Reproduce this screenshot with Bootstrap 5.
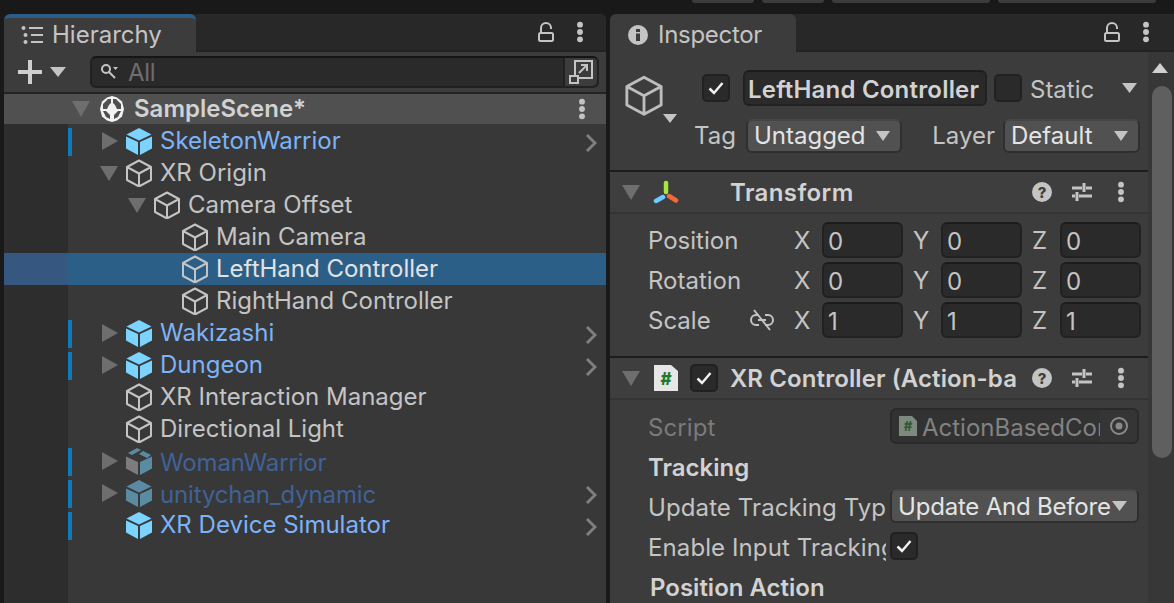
<!DOCTYPE html>
<html lang="en">
<head>
<meta charset="UTF-8">
<title>Unity Editor</title>
<link href="https://cdn.jsdelivr.net/npm/bootstrap@5.3.0/dist/css/bootstrap.min.css" rel="stylesheet">
<style>
html, body { height: 100%; }
body { background: #191919; color: #c4c4c4; font-family: Inter, "Liberation Sans", sans-serif; font-size: 24px; line-height: 32px; overflow: hidden; }
svg { display: block; flex: none; }
.topstrip { height: 14px; padding-left: 692px; gap: 8px; }
.topstrip div { height: 3px; background: #3c3c3c; border-radius: 0 0 3px 3px; }
.panes { height: 589px; padding-left: 4px; gap: 4px; }
.pane-left { width: 602px; background: #383838; border-radius: 6px 6px 0 0; overflow: hidden; }
.pane-right { flex: 1; background: #3c3c3c; border-radius: 6px 0 0 0; overflow: hidden; }
.tabstrip { height: 38px; background: #282828; border-bottom: 2px solid #232323; flex: none; }
.unity-tab { height: 38px; background: #3c3c3c; color: #c4c4c4; border-radius: 6px 6px 0 0; }
.tab-h { width: 192px; padding-left: 17px; gap: 8px; border-top: 4px solid #2c5d87; }
.tab-i { width: 186px; padding-left: 18px; gap: 10px; border-top: 4px solid #3c3c3c; letter-spacing: -.3px; }
.tab-tools { gap: 22px; padding-right: 22px; }
.pane-right .tab-tools { padding-right: 24px; }
.hier-tools { height: 42px; background: #3c3c3c; padding: 0 7px 0 14px; border-bottom: 2px solid #232323; flex: none; }
.searchbox { flex: 1; height: 32px; margin-left: 24px; background: #2a2a2a; border: 2px solid #212121; border-top-color: #151515; border-radius: 6px; color: #6e6e6e; padding-left: 8px; }
.srch-text { line-height: 26px; margin-left: 10px; margin-top: 2px; letter-spacing: -.3px; }
.searchbtn { height: 28px; width: 34px; border-left: 2px solid #212121; margin-left: auto; background: #3c3c3c; border-radius: 0 5px 5px 0; }
.scene-row { height: 30px; background: #505050; font-weight: 600; color: #d2d2d2; padding-left: 68px; padding-right: 20px; flex: none; }
.hier-body { flex: 1; background: linear-gradient(to right, #2d2d2d 64px, #383838 64px); padding-top: 1px; }
.hrow { height: 32px; gap: 7px; padding-right: 9px; white-space: nowrap; position: relative; }
.hrow.selected { background: #2c5f88; color: #e2e2e2; }
.gutter-tint { position: absolute; left: 0; top: 0; width: 64px; height: 32px; background: #36577f; }
.depth1 { padding-left: 121px; }
.depth2 { padding-left: 149px; }
.depth3 { padding-left: 177px; }
.twisty { margin-left: -23px; margin-right: -7px; width: 23px; }
.pfb { color: #7cb3f8; }
.pfb-off { color: #3f6297; }
.pfb-off .row-name { padding-top: 3px; letter-spacing: -.15px; }
.pfb-mark::before { content: ""; position: absolute; left: 64px; top: 3px; width: 4px; height: 28px; background: #0c7bbf; }
.go-right { margin-left: auto; margin-top: 4px; }
.insp-wrap { height: 551px; }
.insp-main { flex: 1; min-width: 0; }
.insp-scroll { width: 26px; flex: none; background: #373737; }
.insp-scroll .up { margin: 11px 0 0 4px; }
.insp-scroll .thumb { width: 20px; height: 372px; margin: 13px 0 0 4px; background: #5f5f5f; border-radius: 10px; }
.obj-head { height: 120px; border-bottom: 2px solid #1d1d1d; flex: none; padding: 15px 8px 0 14px; }
.obj-line { height: 42px; }
.field { background: #2a2a2a; border: 2px solid #212121; border-top-color: #1c1c1c; border-radius: 6px; }
.tick { width: 28px; height: 28px; background: #2a2a2a; border: 2px solid #212121; border-radius: 5px; flex: none; }
.namefield { width: 244px; height: 36px; font-weight: 600; color: #d2d2d2; padding-left: 3px; line-height: 35px; white-space: nowrap; overflow: hidden; letter-spacing: .2px; }
.drop { height: 34px; background: #515151; border: 2px solid #2f2f2f; border-top-color: #454545; border-radius: 6px; color: #e4e4e4; padding: 0 6px; line-height: 30px; white-space: nowrap; }
.comp-head { height: 42px; background: #3e3e3e; font-weight: 600; color: #d2d2d2; border-bottom: 2px solid #343434; padding-left: 12px; padding-right: 23px; flex: none; white-space: nowrap; position: relative; }
.comp-second { height: 44px; border-top: 2px solid #1d1d1d; }
.comp-title { position: absolute; left: 120px; letter-spacing: .1px; padding-top: 1px; }
.title-wide { letter-spacing: .4px; }
.comp-tools { margin-left: auto; gap: 20px; }
.comp-tools .kebab-end { margin-left: 5px; }
.vec-row { height: 40px; padding-left: 38px; padding-right: 8px; }
.vec-label { width: 146px; flex: none; position: relative; padding-top: 2px; }
.vec-axis { width: 28px; flex: none; padding-top: 2px; }
.num { width: 81px; height: 36px; padding-left: 4px; line-height: 35px; flex: none; margin-right: 10px; }
.num:last-child { margin-right: 0; }
.link-ico { position: absolute; left: 102px; top: 6px; }
.prop-row { height: 40px; padding-left: 38px; padding-right: 9px; white-space: nowrap; }
.prop-text { padding-top: 3px; }
.prop-name { width: 238px; margin-right: 4px; flex: none; overflow: hidden; padding-top: 3px; letter-spacing: .1px; }
.dim { color: #7a7a7a; }
.objfield { flex: 1; height: 36px; background: #323232; border: 2px solid #2a2a2a; border-radius: 6px; color: #828282; overflow: hidden; line-height: 32px; padding-left: 7px; gap: 5px; }
.obj-pick { margin-left: -5px; width: 37px; height: 32px; background: #353535; flex: none; }
.strong { font-weight: 600; color: #d2d2d2; }
.drop-long span { letter-spacing: -.2px; padding-top: 2px; }
.static-label { padding-top: 3px; }
</style>
</head>
<body>
<svg width="0" height="0" class="position-absolute">
  <symbol id="cube-line" viewBox="0 0 28 28"><path d="M14 1.500 26 8v13l-12 6.500L2 21V8zM2 8l12 6.500L26 8M14 14.500v13" fill="none" stroke="currentColor" stroke-width="2" stroke-linejoin="round"/></symbol>
  <symbol id="cube-fill" viewBox="0 0 28 28"><path d="M14 1 26.500 7.500 14 13.500 1.500 7.500z" fill="currentColor"/><path d="M1 9.500 13 15v13L1 21.500z M27 9.500 15 15v13l12-6.500z" fill="currentColor"/></symbol>
  <symbol id="kebab" viewBox="0 0 8 24"><circle cx="4" cy="4" r="3.200"/><circle cx="4" cy="12" r="3.200"/><circle cx="4" cy="20" r="3.200"/></symbol>
  <symbol id="tri-down" viewBox="0 0 16 14" preserveAspectRatio="none"><path d="M0 0h16L8 14z"/></symbol>
  <symbol id="tri-right" viewBox="0 0 14 18" preserveAspectRatio="none"><path d="M0 0l14 9L0 18z"/></symbol>
  <symbol id="lock" viewBox="0 0 16 20"><path d="M3 11V6a5 5 0 0 1 10 0v1" fill="none" stroke="#c4c4c4" stroke-width="2"/><rect x="1" y="11" width="14" height="8" rx="1.500" fill="none" stroke="#c4c4c4" stroke-width="2"/></symbol>
  <symbol id="chev" viewBox="0 0 12 20"><path d="M2 2l8 8-8 8" fill="none" stroke="currentColor" stroke-width="3"/></symbol>
  <symbol id="help" viewBox="0 0 20 20"><circle cx="10" cy="10" r="10" fill="#c4c4c4"/><text x="10" y="15.500" text-anchor="middle" font-family="Inter, sans-serif" font-size="15" font-weight="800" fill="#3e3e3e">?</text></symbol>
  <symbol id="sliders" viewBox="0 0 20 20"><path d="M0 6h10M14 6h6M12 1v9M0 14h3M7 14h13M5 10v9" fill="none" stroke="#c4c4c4" stroke-width="3"/></symbol>
  <symbol id="check" viewBox="0 0 16 14"><path d="M1.500 7.500 6 12 14.500 2" fill="none" stroke="#f0f0f0" stroke-width="2.500"/></symbol>
</svg>

<div class="topstrip d-flex">
  <div style="width:62px"></div><div style="width:62px"></div><div style="width:158px"></div><div style="width:158px"></div>
</div>

<div class="panes d-flex">
  <div class="pane-left d-flex flex-column">
    <div class="tabstrip d-flex align-items-start">
      <div class="unity-tab tab-h d-flex align-items-center">
        <svg width="23" height="20" viewBox="0 0 23 20" fill="#c4c4c4"><circle cx="2.500" cy="3" r="2"/><circle cx="4.500" cy="10" r="2"/><circle cx="4.500" cy="17" r="2"/><path d="M8 2h14v2H8zM10 9h12v2H10zM10 16h12v2H10z"/></svg>
        <span>Hierarchy</span>
      </div>
      <div class="tab-tools d-flex align-items-center ms-auto h-100">
        <svg width="16" height="20"><use href="#lock"/></svg>
        <svg width="8" height="22" fill="#c4c4c4"><use href="#kebab"/></svg>
      </div>
    </div>
    <div class="hier-tools d-flex align-items-center">
      <svg width="24" height="24" fill="#cfcfcf"><path d="M10 0h4v10h10v4H14v10h-4V14H0v-4h10z"/></svg>
      <svg class="ms-2" width="16" height="10" fill="#c4c4c4"><use href="#tri-down"/></svg>
      <div class="searchbox d-flex align-items-center">
        <svg width="18" height="18" viewBox="0 0 18 18" fill="none" stroke="#c4c4c4" stroke-width="2"><circle cx="6" cy="6" r="4"/><path d="M9 9l6 6"/><path d="M13 4h5l-2.500 3z" fill="#c4c4c4" stroke="none"/></svg>
        <span class="srch-text">All</span>
        <div class="searchbtn d-flex align-items-center justify-content-center">
          <svg width="24" height="24" viewBox="0 0 24 24" fill="none" stroke="#c4c4c4" stroke-width="2"><path d="M6 16V1h17v17H6z"/><rect x="1" y="16" width="8" height="7" fill="#3c3c3c"/><path d="M10 13l8-8M12 5h6v6"/></svg>
        </div>
      </div>
    </div>
    <div class="scene-row d-flex align-items-center">
      <svg width="18" height="16" fill="#6e6e6e"><use href="#tri-down"/></svg>
      <svg style="margin-left:10px" width="24" height="26" viewBox="0 0 24 26"><path d="M12 0l5 1.500 5 4L24 13l-2 7.500-5 4-5 1.500-5-1.500-5-4L0 13l2-7.500 5-4z" fill="#f2f2f2"/><path d="M8 3 3 8v5h4l2-4 2-2V3zM16 3l5 5v5h-4l-2-4-2-2V3zM3 15h3l4 4v4l-4-2zM21 15h-3l-4 4v4l4-2z" fill="#505050"/></svg>
      <span style="margin-left:10px">SampleScene*</span>
      <svg class="ms-auto" width="8" height="22" fill="#c4c4c4"><use href="#kebab"/></svg>
    </div>
    <div class="hier-body" id="hierBody"></div>
  </div>

  <div class="pane-right d-flex flex-column">
    <div class="tabstrip d-flex align-items-start">
      <div class="unity-tab tab-i d-flex align-items-center">
        <svg width="20" height="20" viewBox="0 0 20 20"><circle cx="10" cy="10" r="10" fill="#c4c4c4"/><path d="M8 4h4v3H8zM8 8.500h4V16H8z" fill="#3c3c3c"/></svg>
        <span>Inspector</span>
      </div>
      <div class="tab-tools d-flex align-items-center ms-auto h-100">
        <svg width="16" height="20"><use href="#lock"/></svg>
        <svg width="8" height="22" fill="#c4c4c4"><use href="#kebab"/></svg>
      </div>
    </div>
    <div class="insp-wrap d-flex">
      <div class="insp-main d-flex flex-column">
        <div class="obj-head">
          <div class="obj-line d-flex align-items-center">
            <svg width="40" height="44" style="color:#bdbdbd;margin-top:14px"><use href="#cube-line"/></svg>
            <div class="tick d-flex align-items-center justify-content-center" style="margin-left:38px"><svg width="16" height="14"><use href="#check"/></svg></div>
            <div class="field namefield" style="margin-left:13px">LeftHand Controller</div>
            <div class="tick" style="margin-left:7px"></div>
            <span class="ms-2 static-label">Static</span>
            <svg class="ms-auto" style="margin-right:3px" width="15" height="10" fill="#c4c4c4"><use href="#tri-down"/></svg>
          </div>
          <div class="obj-line d-flex align-items-center" style="margin-top:6px">
            <svg class="align-self-start" width="14" height="9" fill="#c4c4c4" style="margin-left:39px;margin-top:-1px"><use href="#tri-down"/></svg>
            <span class="text-nowrap" style="margin-left:17px">Tag</span>
            <div class="drop d-flex align-items-center" style="width:156px;margin-left:10px">Untagged<svg class="ms-auto me-1" width="14" height="10" fill="#c4c4c4"><use href="#tri-down"/></svg></div>
            <span class="ms-auto">Layer</span>
            <div class="drop d-flex align-items-center ms-2" style="width:137px">Default<svg class="ms-auto me-1" width="14" height="10" fill="#c4c4c4"><use href="#tri-down"/></svg></div>
          </div>
        </div>
        <div class="comp-head d-flex align-items-center">
          <svg width="18" height="15" fill="#6e6e6e"><use href="#tri-down"/></svg>
          <svg style="margin-left:13px" width="26" height="26" viewBox="0 0 26 26" fill="none" stroke-width="4.500" stroke-linecap="round"><path d="M13 4v9" stroke="#a6e83c"/><path d="M3 22l7-4" stroke="#6ccbff"/><path d="M16 17l7 4.500" stroke="#f0693a"/></svg>
          <span class="comp-title title-wide">Transform</span>
          <div class="comp-tools d-flex align-items-center">
            <svg width="20" height="20"><use href="#help"/></svg>
            <svg width="20" height="20"><use href="#sliders"/></svg>
            <svg class="kebab-end" width="8" height="22" fill="#c4c4c4"><use href="#kebab"/></svg>
          </div>
        </div>
        <div id="vecRows" style="padding:6px 0 16px"></div>
        <div class="comp-head comp-second d-flex align-items-center">
          <svg width="18" height="15" fill="#6e6e6e"><use href="#tri-down"/></svg>
          <svg style="margin-left:14px" width="24" height="28" viewBox="0 0 24 28"><path d="M0 1h17l7 6v20H0z" fill="#e6e6e6"/><text x="12" y="21" text-anchor="middle" font-family="Inter, sans-serif" font-size="17" font-weight="800" fill="#1d7a2e">#</text></svg>
          <div class="tick d-flex align-items-center justify-content-center" style="margin-left:12px"><svg width="16" height="14"><use href="#check"/></svg></div>
          <span class="comp-title">XR Controller (Action-ba</span>
          <div class="comp-tools d-flex align-items-center">
            <svg width="20" height="20"><use href="#help"/></svg>
            <svg width="20" height="20"><use href="#sliders"/></svg>
            <svg class="kebab-end" width="8" height="22" fill="#c4c4c4"><use href="#kebab"/></svg>
          </div>
        </div>
        <div style="padding-top:6px">
          <div class="prop-row d-flex align-items-center">
            <span class="prop-name dim">Script</span>
            <div class="objfield d-flex align-items-center">
              <svg width="18" height="20" viewBox="0 0 18 20"><path d="M0 0h13l5 5v15H0z" fill="#7f8a7f"/><text x="9" y="15" text-anchor="middle" font-family="Inter, sans-serif" font-size="13" font-weight="800" fill="#2d5a32">#</text></svg>
              <span class="flex-grow-1 overflow-hidden prop-text">ActionBasedController</span>
              <div class="obj-pick d-flex align-items-center justify-content-center"><svg width="20" height="20" viewBox="0 0 20 20" fill="none" stroke="#8a8a8a" stroke-width="2"><circle cx="10" cy="10" r="8"/><circle cx="10" cy="10" r="2.500" fill="#8a8a8a"/></svg></div>
            </div>
          </div>
          <div class="prop-row d-flex align-items-center strong"><span class="prop-text">Tracking</span></div>
          <div class="prop-row d-flex align-items-center">
            <span class="prop-name">Update Tracking Type</span>
            <div class="drop drop-long d-flex align-items-center flex-grow-1"><span>Update And Before</span><svg class="ms-auto me-1" width="15" height="10" fill="#c4c4c4"><use href="#tri-down"/></svg></div>
          </div>
          <div class="prop-row d-flex align-items-center">
            <span class="prop-name">Enable Input Tracking</span>
            <div class="tick d-flex align-items-center justify-content-center"><svg width="16" height="14"><use href="#check"/></svg></div>
          </div>
          <div class="prop-row d-flex align-items-center strong" style="padding-left:40px"><span class="prop-text">Position Action</span></div>
        </div>
      </div>
      <div class="insp-scroll">
        <svg class="up" width="16" height="10" fill="#d0d0d0" viewBox="0 0 16 14" preserveAspectRatio="none"><path d="M0 14h16L8 0z"/></svg>
        <div class="thumb"></div>
      </div>
    </div>
  </div>
</div>

<script>
var rows = [
  {n:"SkeletonWarrior", d:1, tw:"r", ic:"f", c:"pfb", mark:1, more:1},
  {n:"XR Origin", d:1, tw:"d"},
  {n:"Camera Offset", d:2, tw:"d"},
  {n:"Main Camera", d:3},
  {n:"LeftHand Controller", d:3, sel:1},
  {n:"RightHand Controller", d:3},
  {n:"Wakizashi", d:1, tw:"r", ic:"f", c:"pfb", mark:1, more:1},
  {n:"Dungeon", d:1, tw:"r", ic:"f", c:"pfb", mark:1, more:1},
  {n:"XR Interaction Manager", d:1},
  {n:"Directional Light", d:1},
  {n:"WomanWarrior", d:1, tw:"r", ic:"m", c:"pfb-off", mark:1},
  {n:"unitychan_dynamic", d:1, tw:"r", ic:"o", c:"pfb-off", mark:1, more:1},
  {n:"XR Device Simulator", d:1, ic:"f", c:"pfb", mark:1, more:1}
];
document.getElementById("hierBody").innerHTML = rows.map(function(r) {
  var tw = "";
  if (r.tw == "r") tw = '<span class="twisty"><svg width="16" height="18" fill="#6e6e6e"><use href="#tri-right"/></svg></span>';
  if (r.tw == "d") tw = '<span class="twisty"><svg width="18" height="15" fill="#6e6e6e" style="margin-left:-2px"><use href="#tri-down"/></svg></span>';
  var icon = '<svg width="28" height="28" style="color:#c4c4c4"><use href="#cube-line"/></svg>';
  if (r.ic == "f") icon = '<svg width="28" height="28" style="color:#7ad4ff"><use href="#cube-fill"/></svg>';
  if (r.ic == "o") icon = '<svg width="28" height="28" style="color:#5b8ba3"><use href="#cube-fill"/></svg>';
  if (r.ic == "m") icon = '<svg width="28" height="28" viewBox="0 0 28 28"><path d="M1 9.500 13 15v13L1 21.500z" fill="#7c7c7c"/><path d="M27 9.500 15 15v13l12-6.500z" fill="#5b8ba3"/><path d="M3 6l9-5 4 2-9 5zM18 4l8 4-4 3-8-4z" fill="#5b8ba3"/></svg>';
  return '<div class="hrow d-flex align-items-center depth' + r.d + (r.sel ? ' selected' : '') + (r.mark ? ' pfb-mark' : '') + (r.c ? ' ' + r.c : '') + '">' +
    (r.sel ? '<span class="gutter-tint"></span>' : '') + tw + '<span class="position-relative">' + icon + '</span><span class="row-name position-relative">' + r.n + '</span>' +
    (r.more ? '<svg class="go-right" width="12" height="20" style="color:#7f7f7f"><use href="#chev"/></svg>' : '') + '</div>';
}).join("");

var vecs = [["Position","0"],["Rotation","0"],["Scale","1"]];
document.getElementById("vecRows").innerHTML = vecs.map(function(v) {
  var link = v[0] == "Scale" ? '<svg class="link-ico" width="24" height="22" viewBox="0 0 24 22" fill="none" stroke="#c4c4c4" stroke-width="2"><path d="M9 6H6a5 5 0 0 0 0 10h3M15 6h3a5 5 0 0 1 0 10h-3M8 11h8M4 1l16 20"/></svg>' : '';
  var cells = ["X","Y","Z"].map(function(a) {
    return '<span class="vec-axis">' + a + '</span><div class="field num">' + v[1] + '</div>';
  }).join("");
  return '<div class="vec-row d-flex align-items-center"><span class="vec-label">' + v[0] + link + '</span>' + cells + '</div>';
}).join("");
</script>
<script src="https://cdn.jsdelivr.net/npm/bootstrap@5.3.0/dist/js/bootstrap.bundle.min.js"></script>
</body>
</html>
